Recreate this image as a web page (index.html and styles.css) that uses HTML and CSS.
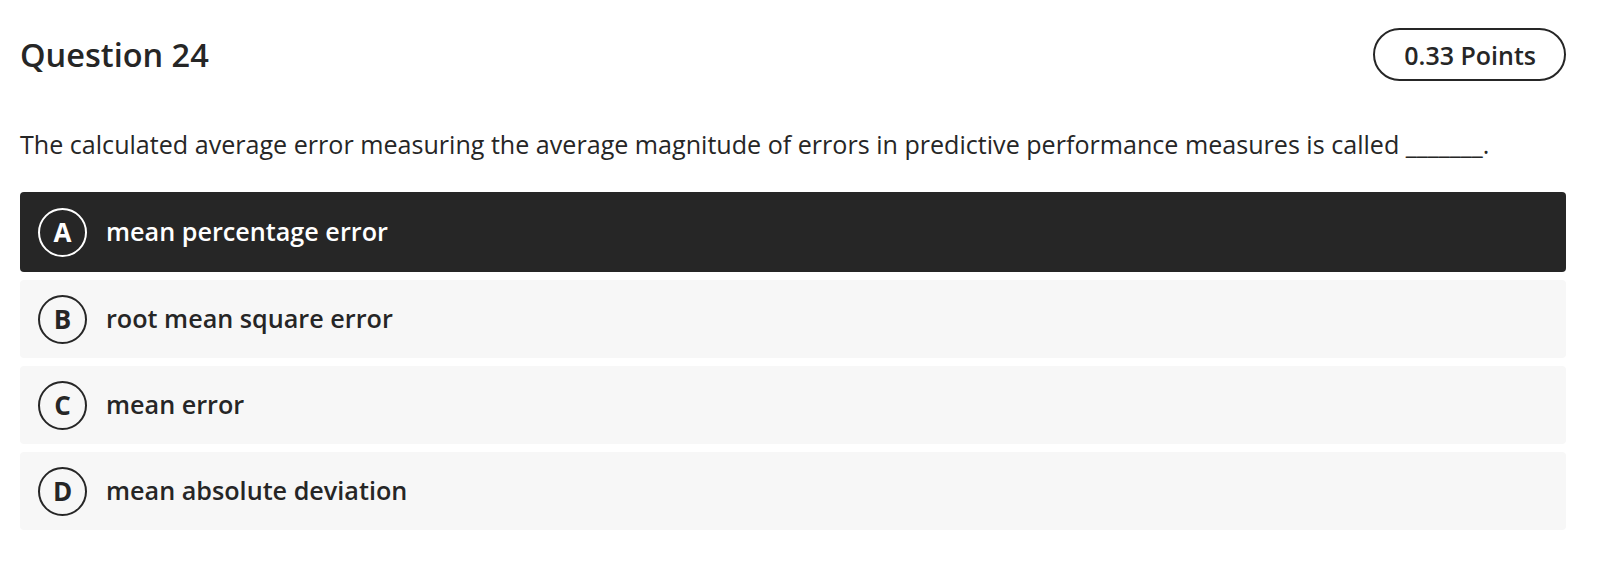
FILE: index.html
```html
<!DOCTYPE html>
<html lang="en">
<head>
<meta charset="utf-8">
<title>Question 24</title>
<link rel="stylesheet" href="styles.css">
</head>
<body>
<div class="quiz">
  <div class="quiz-header">
    <h1 class="quiz-title">Question 24</h1>
    <div class="points">0.33 Points</div>
  </div>
  <p class="prompt">The calculated average error measuring the average magnitude of errors in predictive performance measures is called _______.</p>
  <div class="options">
    <div class="option selected"><span class="letter">A</span><span class="label">mean percentage error</span></div>
    <div class="option"><span class="letter">B</span><span class="label">root mean square error</span></div>
    <div class="option"><span class="letter">C</span><span class="label">mean error</span></div>
    <div class="option"><span class="letter">D</span><span class="label">mean absolute deviation</span></div>
  </div>
</div>
</body>
</html>
```
FILE: styles.css
```css
html, body {
  margin: 0;
  padding: 0;
  background: #ffffff;
}
body {
  font-family: "Open Sans", "Noto Sans", sans-serif;
  color: #262626;
}
.quiz {
  padding: 28px 44px 0 20px;
}
.quiz-header {
  display: flex;
  justify-content: space-between;
  align-items: center;
  height: 53px;
}
.quiz-title {
  margin: 0;
  font-size: 32.5px;
  font-weight: 600;
  line-height: 44px;
}
.points {
  box-sizing: border-box;
  height: 53px;
  border: 2px solid #262626;
  border-radius: 27px;
  padding: 0 28px 0 29px;
  display: flex;
  align-items: center;
  font-size: 25px;
  font-weight: 600;
}
.prompt {
  margin: 45px 0 30px 0;
  font-size: 25.1px;
  line-height: 36px;
  font-weight: 400;
}
.options {
  display: flex;
  flex-direction: column;
  gap: 8px;
}
.option {
  display: flex;
  align-items: center;
  gap: 19px;
  height: 78px;
  box-sizing: border-box;
  padding: 0 18px;
  background: #f7f7f7;
  border-radius: 4px;
  font-size: 25.2px;
  font-weight: 600;
}
.option.selected {
  height: 80px;
  background: #262626;
  color: #ffffff;
}
.label {
  padding-bottom: 2px;
}
.letter {
  box-sizing: border-box;
  width: 49px;
  height: 49px;
  border: 2px solid currentColor;
  border-radius: 50%;
  display: flex;
  align-items: center;
  justify-content: center;
  font-weight: 700;
  font-size: 26px;
  flex: none;
}
```
